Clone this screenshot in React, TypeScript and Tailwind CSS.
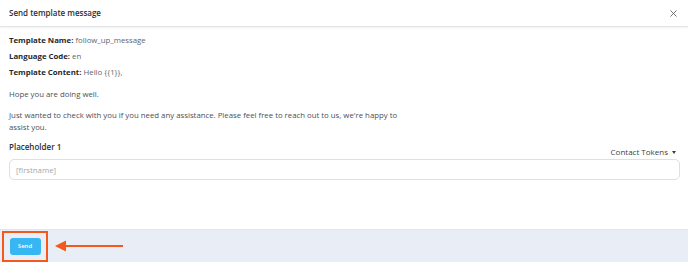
import { X } from 'lucide-react'

const FONT = { fontFamily: '"Open Sans", "Noto Sans", sans-serif' }

export default function App() {
  return (
    <div className="flex h-[262px] w-[688px] flex-col bg-white text-[#3a3f44]" style={FONT}>
      {/* header */}
      <div className="flex h-[27px] shrink-0 items-center justify-between border-b border-[#e3e5e8] pl-[9px] pr-[9px] shadow-[0_1px_2px_rgba(0,0,0,0.06)]">
        <span className="text-[8px] font-semibold text-[#2b3035]">Send template message</span>
        <X className="h-[11px] w-[11px] text-[#555]" strokeWidth={1.8} />
      </div>

      {/* body */}
      <div className="flex flex-1 flex-col px-[9px] pt-[7px] text-[7.8px] leading-[12px]">
        <p>
          <span className="font-bold text-[#24292e]">Template Name:</span>{' '}
          <span className="text-[#5f656b]">follow_up_message</span>
        </p>
        <p className="mt-[4px]">
          <span className="font-bold text-[#24292e]">Language Code:</span>{' '}
          <span className="text-[#5f656b]">en</span>
        </p>
        <p className="mt-[4px]">
          <span className="font-bold text-[#24292e]">Template Content:</span>{' '}
          <span className="text-[#5f656b]">Hello {'{{1}}'},</span>
        </p>
        <p className="mt-[10px] text-[#4a5056]">Hope you are doing well.</p>
        <p className="mt-[9px] w-[395px] text-[#4a5056]">
          Just wanted to check with you if you need any assistance. Please feel free to reach out to us, we're happy to
          assist you.
        </p>

        <div className="mt-[8px] flex items-end justify-between">
          <span className="text-[8px] font-semibold text-[#2b3035]">Placeholder 1</span>
          <span className="mr-[3px] flex translate-y-[5px] items-center gap-[4px] text-[8px] text-[#3a3f44]">
            Contact Tokens
            <span className="h-0 w-0 border-x-[2.5px] border-t-[3px] border-x-transparent border-t-[#3a3f44]" />
          </span>
        </div>
        <div className="mt-[6px] mr-[-1px] flex h-[21px] items-center rounded-[5px] border border-[#dcdfe3] px-[6px] text-[7.8px] text-[#a3a8ad]">
          [firstname]
        </div>
      </div>

      {/* footer */}
      <div className="flex h-[33px] shrink-0 items-center border-t border-[#e1e6ee] bg-[#e9eef6]">
        <div className="relative ml-[2px] flex h-[31px] w-[46px] items-center justify-center border-2 border-[#f4581c]">
          <button className="flex h-[17px] w-[31px] items-center justify-center rounded-[3px] bg-[#36b6f2] text-[6px] font-semibold text-white">
            Send
          </button>
        </div>
        <svg className="ml-[5px]" width="72" height="14" viewBox="0 0 72 14">
          <path d="M2 7 L13 1.5 L13 12.5 Z" fill="#f4581c" />
          <line x1="12" y1="7" x2="70" y2="7" stroke="#f4581c" strokeWidth="2" />
        </svg>
      </div>
    </div>
  )
}
